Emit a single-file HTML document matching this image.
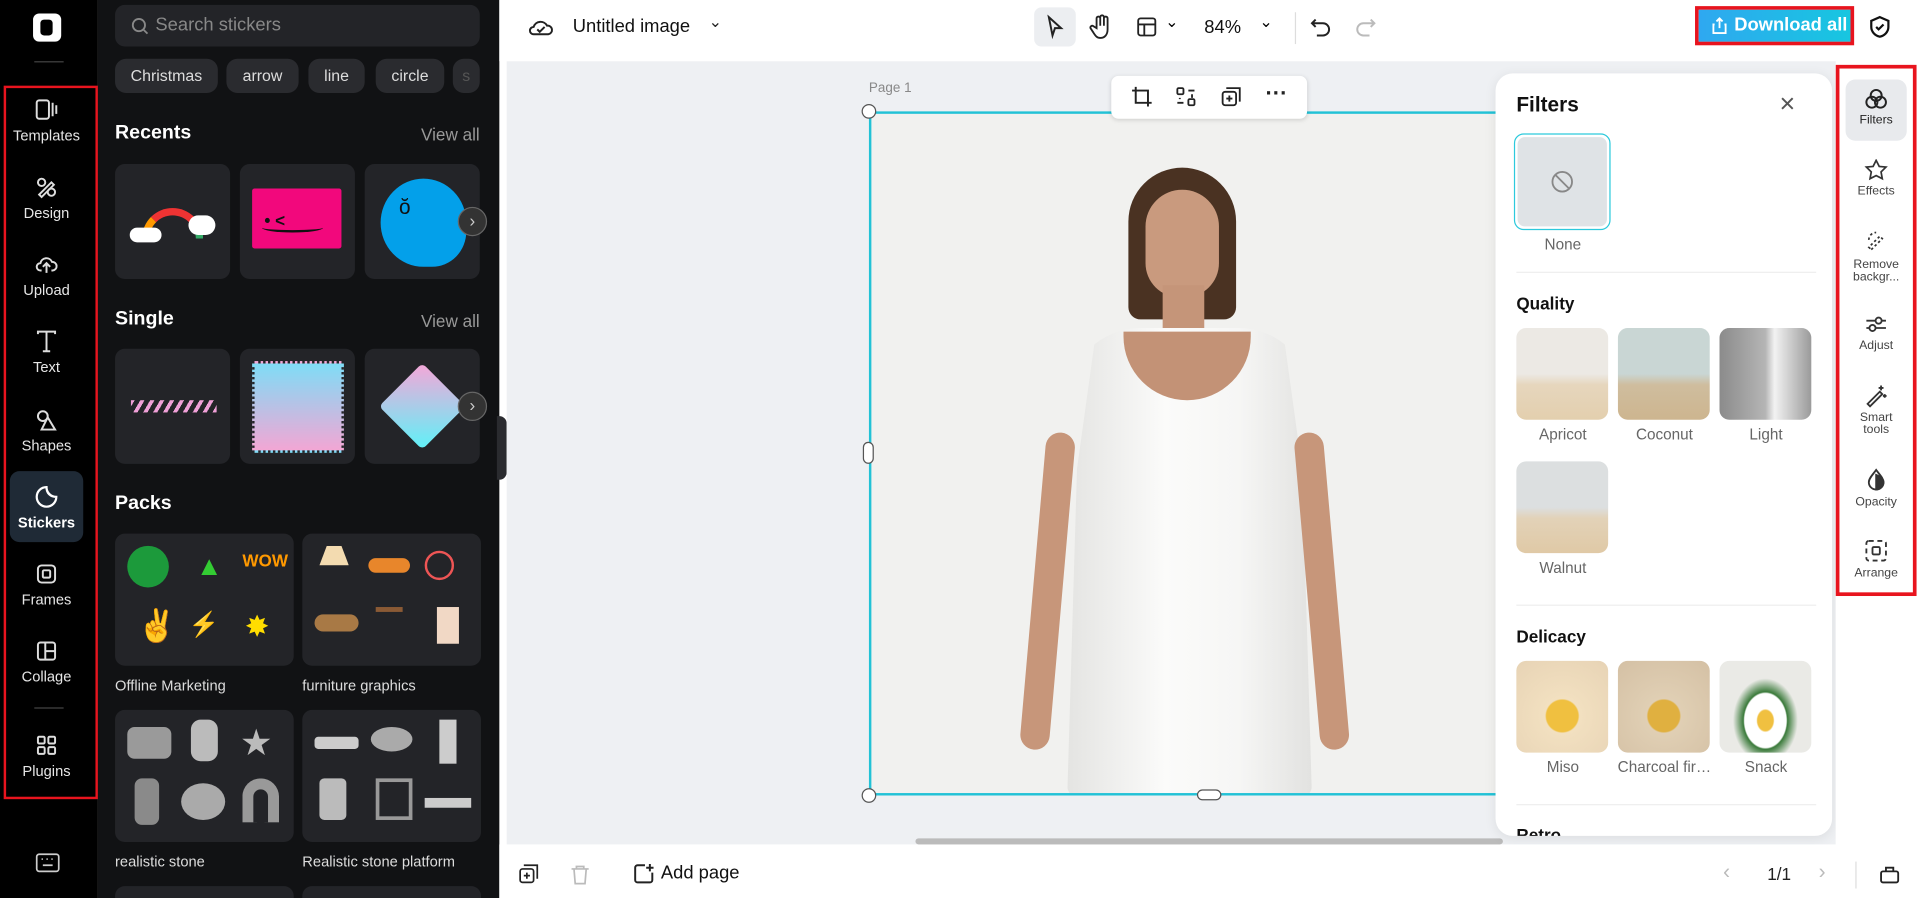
<!DOCTYPE html>
<html><head><meta charset="utf-8">
<style>
*{box-sizing:border-box;margin:0;padding:0}
html,body{width:1919px;height:898px;overflow:hidden;background:#fff}
#w{width:1568px;height:734px;transform:scale(1.22385);transform-origin:0 0;position:relative;font-family:"Liberation Sans",sans-serif}
.a{position:absolute}
.rail{left:0;top:0;width:80px;height:734px;background:#000}
.ri{position:absolute;left:8px;width:60px;text-align:center;color:#e6e6e6;font-size:12px}
.ri svg{display:block;margin:0 auto 4px}
.panel{left:80px;top:0;width:328px;height:734px;background:#111214}
.chip{position:absolute;top:48px;height:28px;border-radius:9px;background:#2a2b2f;color:#ddd;font-size:13px;line-height:28px;text-align:center}
.h{position:absolute;color:#fff;font-weight:bold;font-size:16px}
.va{position:absolute;right:16px;color:#999;font-size:14px}
.card{position:absolute;width:94px;height:94px;border-radius:8px;background:#232428;overflow:hidden}
.pack{position:absolute;width:146px;height:108px;border-radius:8px;background:#232428}
.pl{position:absolute;color:#ddd;font-size:12px}
.nxt{position:absolute;width:24px;height:24px;border-radius:50%;background:#333;border:1px solid #666;color:#ccc;font-size:14px;line-height:21px;text-align:center}
.ft{position:absolute;width:75px;height:75px;border-radius:8px;overflow:hidden}
.fl{position:absolute;width:90px;text-align:center;font-size:12.5px;color:#666}
.rr{position:absolute;left:1508px;width:50px;text-align:center;font-size:10px;color:#444;line-height:10px}
.rr svg{display:block;margin:0 auto 4px}
.desert{background:linear-gradient(#ece9e4 0 50%,#e6d6bd 62%,#e3cfae)}
</style></head><body><div id="w">
<!-- left rail -->
<div class="a rail">
 <div class="a" style="left:27px;top:11px;width:23px;height:23px;background:#fff;border-radius:5px"><div class="a" style="left:6px;top:5px;width:10px;height:13px;border-radius:3px;background:#000"></div></div>
 <div class="a" style="left:28px;top:50px;width:24px;height:1px;background:#444"></div>
 <div class="a" style="left:3px;top:70px;width:77px;height:583px;border:2px solid #e8141e"></div>
 <div class="ri" style="top:80px"><svg width="20" height="20" viewBox="0 0 20 20" fill="none" stroke="#ddd" stroke-width="1.6"><rect x="2" y="2" width="10" height="15" rx="2"/><path d="M15 4v11M18 6v7"/></svg>Templates</div>
 <div class="ri" style="top:143px"><svg width="20" height="20" viewBox="0 0 20 20" fill="none" stroke="#ddd" stroke-width="1.6"><circle cx="6" cy="6" r="3"/><path d="M4 16l10-10 2 2-10 10z"/><circle cx="14" cy="14" r="3"/></svg>Design</div>
 <div class="ri" style="top:206px"><svg width="20" height="20" viewBox="0 0 20 20" fill="none" stroke="#ddd" stroke-width="1.6"><path d="M6 15H5a3 3 0 010-6 5 5 0 019.5-1A3.5 3.5 0 0115 15h-1M10 17V10M7 12l3-3 3 3"/></svg>Upload</div>
 <div class="ri" style="top:269px"><svg width="20" height="20" viewBox="0 0 20 20" fill="none" stroke="#ddd" stroke-width="1.6"><path d="M3 4V2h14v2M10 2v16M7 18h6"/></svg>Text</div>
 <div class="ri" style="top:333px"><svg width="20" height="20" viewBox="0 0 20 20" fill="none" stroke="#ddd" stroke-width="1.6"><circle cx="7" cy="7" r="4"/><path d="M11 8l6 10H6z"/></svg>Shapes</div>
 <div class="a" style="left:8px;top:385px;width:60px;height:58px;background:#1f2a36;border-radius:8px"></div>
 <div class="ri" style="top:396px;color:#fff;font-weight:bold"><svg width="20" height="20" viewBox="0 0 20 20" fill="none" stroke="#fff" stroke-width="1.8"><path d="M10 2a8 8 0 108 8 8 8 0 01-8-8zM10 2c0 5 3 8 8 8"/></svg>Stickers</div>
 <div class="ri" style="top:459px"><svg width="20" height="20" viewBox="0 0 20 20" fill="none" stroke="#ddd" stroke-width="1.6"><rect x="3" y="3" width="14" height="14" rx="3"/><rect x="7" y="7" width="6" height="6" rx="1"/></svg>Frames</div>
 <div class="ri" style="top:522px"><svg width="20" height="20" viewBox="0 0 20 20" fill="none" stroke="#ddd" stroke-width="1.6"><rect x="3" y="3" width="14" height="14" rx="2"/><path d="M9 3v14M9 10h8"/></svg>Collage</div>
 <div class="a" style="left:28px;top:578px;width:24px;height:1px;background:#444"></div>
 <div class="ri" style="top:599px"><svg width="20" height="20" viewBox="0 0 20 20" fill="none" stroke="#ddd" stroke-width="1.6"><rect x="3" y="3" width="5.5" height="5.5" rx="1"/><rect x="11.5" y="3" width="5.5" height="5.5" rx="1"/><rect x="3" y="11.5" width="5.5" height="5.5" rx="1"/><rect x="11.5" y="11.5" width="5.5" height="5.5" rx="1"/></svg>Plugins</div>
 <svg class="a" style="left:29px;top:697px" width="20" height="16" viewBox="0 0 20 16" fill="none" stroke="#ccc" stroke-width="1.4"><rect x="1" y="1" width="18" height="14" rx="2"/><path d="M5 5h1M9 5h1M13 5h1M6 10h8"/></svg>
</div>
<!-- sticker panel -->
<div class="a panel">
 <div class="a" style="left:14px;top:4px;width:298px;height:34px;border-radius:8px;background:#232428;color:#888;font-size:15px;line-height:34px;padding-left:33px">Search stickers
  <svg class="a" style="left:13px;top:10px" width="15" height="15" viewBox="0 0 15 15" fill="none" stroke="#888" stroke-width="1.5"><circle cx="6.5" cy="6.5" r="5"/><path d="M10.5 10.5l3 3"/></svg></div>
 <div class="chip" style="left:14px;width:84px">Christmas</div>
 <div class="chip" style="left:105px;width:59px">arrow</div>
 <div class="chip" style="left:172px;width:46px">line</div>
 <div class="chip" style="left:227px;width:56px">circle</div>
 <div class="chip" style="left:290px;width:22px;color:#555">s</div>
 <div class="h" style="left:14px;top:100px">Recents</div><div class="va" style="top:102px">View all</div>
 <div class="card" style="left:14px;top:134px"><div class="a" style="left:22px;top:36px;width:50px;height:25px;border-radius:25px 25px 0 0;border:6px solid;border-color:#e33 #3a6 #33c #f90;border-bottom:none"></div><div class="a" style="left:12px;top:52px;width:26px;height:12px;background:#fff;border-radius:8px"></div><div class="a" style="left:60px;top:42px;width:22px;height:16px;background:#fff;border-radius:8px"></div></div>
 <div class="card" style="left:116px;top:134px"><div class="a" style="left:10px;top:20px;width:73px;height:49px;background:#f2087c;border-radius:2px"></div><div class="a" style="left:20px;top:38px;color:#111;font-size:14px;font-weight:bold">•  &lt;</div><div class="a" style="left:18px;top:48px;width:50px;height:8px;border-bottom:2px solid #111;border-radius:0 0 50% 50%"></div></div>
 <div class="card" style="left:218px;top:134px"><div class="a" style="left:13px;top:12px;width:70px;height:72px;background:#03a0ea;border-radius:50% 50% 40% 50%"></div><div class="a" style="left:28px;top:26px;font-size:17px;color:#111">ŏ</div></div>
 <div class="nxt" style="left:294px;top:169px">›</div>
 <div class="h" style="left:14px;top:252px">Single</div><div class="va" style="top:254px">View all</div>
 <div class="card" style="left:14px;top:285px"><div class="a" style="left:13px;top:42px;width:70px;height:10px;background:repeating-linear-gradient(-60deg,#f0a0d8 0 3px,transparent 3px 7px)"></div></div>
 <div class="card" style="left:116px;top:285px"><div class="a" style="left:10px;top:10px;width:75px;height:75px;background:linear-gradient(#7fdcf6,#f3a6d4);border:2px dotted #232428"></div></div>
 <div class="card" style="left:218px;top:285px"><div class="a" style="left:22px;top:22px;width:50px;height:50px;transform:rotate(45deg);background:linear-gradient(135deg,#f6a6d8,#5ef2f8);border-radius:4px"></div></div>
 <div class="nxt" style="left:294px;top:320px">›</div>
 <div class="h" style="left:14px;top:403px">Packs</div>
 <div class="pack" style="left:14px;top:436px"><div class="a" style="left:10px;top:10px;width:34px;height:34px;border-radius:50%;background:#1c9a3b"></div><div class="a" style="left:66px;top:14px;color:#3c3;font-size:22px">▲</div><div class="a" style="left:104px;top:14px;color:#f90;font-weight:bold;font-size:14px">WOW</div><div class="a" style="left:18px;top:60px;color:#fff;font-size:26px">✌</div><div class="a" style="left:60px;top:62px;color:#fc0;font-size:20px">⚡</div><div class="a" style="left:106px;top:62px;color:#fd0;font-size:24px">✸</div></div>
 <div class="pl" style="left:14px;top:553px">Offline Marketing</div>
 <div class="pack" style="left:167px;top:436px"><div class="a" style="left:14px;top:10px;width:24px;height:16px;background:#f3dbb0;clip-path:polygon(25% 0,75% 0,100% 100%,0 100%)"></div><div class="a" style="left:54px;top:20px;width:34px;height:12px;background:#e8862b;border-radius:6px"></div><div class="a" style="left:100px;top:14px;width:24px;height:24px;border:2px solid #e55;border-radius:50%"></div><div class="a" style="left:10px;top:66px;width:36px;height:14px;background:#a87945;border-radius:7px"></div><div class="a" style="left:60px;top:60px;width:22px;height:30px;border-top:4px solid #8a5a35"></div><div class="a" style="left:110px;top:60px;width:18px;height:30px;background:#f1d8c5"></div></div>
 <div class="pl" style="left:167px;top:553px">furniture graphics</div>
 <div class="pack" style="left:14px;top:580px"><div class="a" style="left:10px;top:14px;width:36px;height:26px;background:#9a9a9a;border-radius:6px"></div><div class="a" style="left:62px;top:8px;width:22px;height:34px;background:#bbb;border-radius:8px"></div><div class="a" style="left:102px;top:10px;color:#bbb;font-size:30px">★</div><div class="a" style="left:16px;top:56px;width:20px;height:38px;background:#8a8a8a;border-radius:6px"></div><div class="a" style="left:54px;top:60px;width:36px;height:30px;background:#aaa;border-radius:50%"></div><div class="a" style="left:104px;top:56px;width:30px;height:36px;border:9px solid #999;border-bottom:none;border-radius:15px 15px 0 0"></div></div>
 <div class="pl" style="left:14px;top:697px">realistic stone</div>
 <div class="pack" style="left:167px;top:580px"><div class="a" style="left:10px;top:22px;width:36px;height:10px;background:#ccc;border-radius:3px"></div><div class="a" style="left:56px;top:14px;width:34px;height:20px;background:#aaa;border-radius:50%"></div><div class="a" style="left:112px;top:8px;width:14px;height:36px;background:#ccc"></div><div class="a" style="left:14px;top:56px;width:22px;height:34px;background:#bbb;border-radius:4px"></div><div class="a" style="left:60px;top:56px;width:30px;height:34px;border:3px solid #999"></div><div class="a" style="left:100px;top:72px;width:38px;height:8px;background:#ccc"></div></div>
 <div class="pl" style="left:167px;top:697px">Realistic stone platform</div>
 <div class="a" style="left:14px;top:724px;width:146px;height:20px;background:#232428;border-radius:8px"></div>
 <div class="a" style="left:167px;top:724px;width:146px;height:20px;background:#232428;border-radius:8px"></div>
</div>
<div class="a" style="left:406px;top:340px;width:8px;height:52px;background:#2a2b2f;border-radius:0 6px 6px 0"></div>
<!-- canvas area -->
<div class="a" style="left:414px;top:50px;width:1086px;height:640px;background:#eef0f3"></div>
<div class="a" style="left:408px;top:0;width:1160px;height:50px;background:#fff"></div>
<svg class="a" style="left:432px;top:13px" width="20" height="18" viewBox="0 0 20 18" fill="none" stroke="#222" stroke-width="1.6"><path d="M5 15H4a3 3 0 010-6 6 6 0 0111-1 3.5 3.5 0 011 7zM7 11l2 2 4-4"/></svg>
<div class="a" style="left:468px;top:13px;font-size:15px;color:#111">Untitled image</div>
<div class="a" style="left:579px;top:10px;font-size:13px;color:#222">⌄</div>
<div class="a" style="left:845px;top:6px;width:34px;height:32px;background:#eceef1;border-radius:6px"></div>
<svg class="a" style="left:854px;top:12px" width="16" height="20" viewBox="0 0 16 20" fill="none" stroke="#222" stroke-width="1.6"><path d="M3 2l10 9H8l-2 6z"/></svg>
<svg class="a" style="left:890px;top:11px" width="20" height="22" viewBox="0 0 20 22" fill="none" stroke="#222" stroke-width="1.5"><path d="M6 12V4a1.5 1.5 0 013 0v6V3a1.5 1.5 0 013 0v7V4a1.5 1.5 0 013 0v9c0 4-2 7-6 7-3 0-4-2-6-5l-2-3a1.5 1.5 0 012.5-1.5z"/></svg>
<svg class="a" style="left:928px;top:13px" width="18" height="18" viewBox="0 0 18 18" fill="none" stroke="#222" stroke-width="1.5"><rect x="2" y="2" width="14" height="14" rx="2"/><path d="M2 7h14M7 7v9"/></svg>
<div class="a" style="left:952px;top:10px;font-size:13px">⌄</div>
<div class="a" style="left:984px;top:14px;font-size:15px;color:#111">84%</div>
<div class="a" style="left:1029px;top:10px;font-size:13px">⌄</div>
<div class="a" style="left:1058px;top:10px;width:1px;height:26px;background:#ddd"></div>
<svg class="a" style="left:1070px;top:13px" width="18" height="18" viewBox="0 0 18 18" fill="none" stroke="#222" stroke-width="1.6"><path d="M5 3L2 6l3 3M2 6h9a5 5 0 010 10H6"/></svg>
<svg class="a" style="left:1107px;top:13px" width="18" height="18" viewBox="0 0 18 18" fill="none" stroke="#bbb" stroke-width="1.6"><path d="M13 3l3 3-3 3M16 6H7a5 5 0 000 10h5"/></svg>
<div class="a" style="left:1385px;top:5px;width:130px;height:32px;border:3px solid #e8141e"></div>
<div class="a" style="left:1388px;top:8px;width:124px;height:26px;background:linear-gradient(90deg,#2fa8f0,#17c6e0);color:#fff;font-weight:bold;font-size:15px;line-height:26px;padding-left:29px">Download all</div>
<svg class="a" style="left:1398px;top:14px" width="14" height="14" viewBox="0 0 14 14" fill="none" stroke="#fff" stroke-width="1.5"><path d="M3 6H2v7h10V6h-1M7 9V1M4.5 3.5L7 1l2.5 2.5"/></svg>
<svg class="a" style="left:1527px;top:12px" width="18" height="20" viewBox="0 0 18 20" fill="none" stroke="#111" stroke-width="1.8"><path d="M9 2l7 3v5c0 4-3 7-7 8-4-1-7-4-7-8V5zM6 10l2 2 4-4"/></svg>
<!-- canvas -->
<div class="a" style="left:710px;top:66px;font-size:11px;color:#888">Page 1</div>
<div class="a" style="left:710px;top:91px;width:520px;height:559px;background:#f1f1ef;border:2px solid #22c2d6;overflow:hidden">
 <div class="a" style="left:210px;top:44px;width:88px;height:124px;background:#4a3222;border-radius:44px 44px 10px 10px"></div>
 <div class="a" style="left:224px;top:62px;width:60px;height:88px;background:#c99a7e;border-radius:30px 30px 28px 28px"></div>
 <div class="a" style="left:238px;top:140px;width:34px;height:44px;background:#c59579"></div>
 <div class="a" style="left:160px;top:175px;width:200px;height:384px;background:linear-gradient(90deg,#e4e4e2,#fbfbfa 40%,#f6f6f5 70%,#e2e2e0);border-radius:60px 60px 10px 10px;clip-path:polygon(12% 0,88% 0,96% 30%,100% 100%,0 100%,4% 30%)"></div>
 <div class="a" style="left:206px;top:178px;width:104px;height:56px;background:#c39276;border-radius:0 0 52px 52px"></div>
 <div class="a" style="left:132px;top:260px;width:24px;height:260px;background:#c7967a;border-radius:12px;transform:rotate(5deg)"></div>
 <div class="a" style="left:356px;top:260px;width:24px;height:260px;background:#c7967a;border-radius:12px;transform:rotate(-5deg)"></div>
</div>
<div class="a" style="left:704px;top:85px;width:12px;height:12px;border-radius:50%;background:#fff;border:1px solid #555"></div>
<div class="a" style="left:704px;top:644px;width:12px;height:12px;border-radius:50%;background:#fff;border:1px solid #555"></div>
<div class="a" style="left:705px;top:361px;width:9px;height:18px;border-radius:5px;background:#fff;border:1px solid #555"></div>
<div class="a" style="left:978px;top:645px;width:20px;height:9px;border-radius:5px;background:#fff;border:1px solid #555"></div>
<div class="a" style="left:908px;top:62px;width:160px;height:35px;background:#fff;border-radius:6px;box-shadow:0 1px 4px rgba(0,0,0,.15)"></div>
<svg class="a" style="left:924px;top:70px" width="18" height="18" viewBox="0 0 18 18" fill="none" stroke="#222" stroke-width="1.6"><path d="M4 1v13h13M1 4h13v13"/></svg>
<svg class="a" style="left:960px;top:70px" width="18" height="18" viewBox="0 0 18 18" fill="none" stroke="#222" stroke-width="1.5"><rect x="2" y="2" width="5" height="5" rx="1"/><rect x="11" y="11" width="5" height="5" rx="1"/><path d="M11 4h5M2 14h5M14 7v3M4 10v1"/></svg>
<svg class="a" style="left:997px;top:70px" width="18" height="18" viewBox="0 0 18 18" fill="none" stroke="#222" stroke-width="1.5"><rect x="2" y="5" width="11" height="11" rx="2"/><path d="M5 2h11v11M7.5 8v5M5 10.5h5"/></svg>
<div class="a" style="left:1034px;top:66px;font-size:18px;font-weight:bold;color:#222">···</div>
<div class="a" style="left:748px;top:685px;width:480px;height:5px;background:#bbb;border-radius:3px"></div>
<!-- filters panel -->
<div class="a" style="left:1222px;top:60px;width:275px;height:623px;background:#fff;border-radius:14px;box-shadow:0 2px 10px rgba(0,0,0,.08);overflow:hidden">
 <div class="a" style="left:17px;top:16px;font-size:17px;font-weight:bold;color:#111">Filters</div>
 <div class="a" style="left:232px;top:12px;font-size:22px;color:#555;font-weight:300">×</div>
 <div class="a" style="left:15px;top:49px;width:79px;height:79px;border:1.5px solid #2cc9dc;border-radius:8px;padding:2px"><div style="width:100%;height:100%;background:#dfe3e6;border-radius:6px"></div></div>
 <svg class="a" style="left:45px;top:79px" width="19" height="19" viewBox="0 0 19 19" fill="none" stroke="#888" stroke-width="1.5"><circle cx="9.5" cy="9.5" r="8"/><path d="M4 4l11 11"/></svg>
 <div class="fl" style="left:10px;top:133px">None</div>
 <div class="a" style="left:17px;top:162px;width:245px;height:1px;background:#eee"></div>
 <div class="a" style="left:17px;top:180px;font-size:14px;font-weight:bold;color:#111">Quality</div>
 <div class="ft desert" style="left:17px;top:208px"></div>
 <div class="ft desert" style="left:100px;top:208px;background:linear-gradient(#c9d6d4 0 50%,#cfbd9e 62%,#cdb58f)"></div>
 <div class="ft" style="left:183px;top:208px;background:linear-gradient(90deg,#8b8b8b,#b5b5b5 50%,#f2f2f2 60%,#9a9a9a)"></div>
 <div class="fl" style="left:10px;top:288px">Apricot</div><div class="fl" style="left:93px;top:288px">Coconut</div><div class="fl" style="left:176px;top:288px">Light</div>
 <div class="ft desert" style="left:17px;top:317px;background:linear-gradient(#dcdfe0 0 50%,#e2d2b8 62%,#e0c9a6)"></div>
 <div class="fl" style="left:10px;top:397px">Walnut</div>
 <div class="a" style="left:17px;top:434px;width:245px;height:1px;background:#eee"></div>
 <div class="a" style="left:17px;top:452px;font-size:14px;font-weight:bold;color:#111">Delicacy</div>
 <div class="ft" style="left:17px;top:480px;background:radial-gradient(circle at 50% 60%,#f0c040 0 22%,#f2e0c0 24%,#e7d3b5)"></div>
 <div class="ft" style="left:100px;top:480px;background:radial-gradient(circle at 50% 60%,#e0b040 0 22%,#e0cfb4 24%,#d4c0a4)"></div>
 <div class="ft" style="left:183px;top:480px;background:radial-gradient(ellipse at 50% 65%,#f0c040 0 12%,#fff 14% 32%,#3a7a3a 34%,#eaeae6 50%)"></div>
 <div class="fl" style="left:10px;top:560px">Miso</div><div class="fl" style="left:93px;top:560px">Charcoal fir…</div><div class="fl" style="left:176px;top:560px">Snack</div>
 <div class="a" style="left:17px;top:597px;width:245px;height:1px;background:#eee"></div>
 <div class="a" style="left:17px;top:614px;font-size:14px;font-weight:bold;color:#111">Retro</div>
</div>
<!-- right rail -->
<div class="a" style="left:1500px;top:52px;width:68px;height:638px;background:#fff"></div>
<div class="a" style="left:1500px;top:53px;width:66px;height:434px;border:3px solid #e8141e"></div>
<div class="a" style="left:1508px;top:65px;width:50px;height:50px;background:#e8eaed;border-radius:8px"></div>
<div class="rr" style="top:72px;color:#222"><svg width="20" height="18" viewBox="0 0 20 18" fill="none" stroke="#222" stroke-width="1.6"><circle cx="10" cy="6" r="4.5"/><circle cx="6.5" cy="11.5" r="4.5"/><circle cx="13.5" cy="11.5" r="4.5"/></svg>Filters</div>
<div class="rr" style="top:130px"><svg width="20" height="18" viewBox="0 0 20 18" fill="none" stroke="#333" stroke-width="1.4"><path d="M10 1l2.5 5 5.5.5-4 4 1 5.5-5-2.5-5 2.5 1-5.5-4-4 5.5-.5z"/></svg>Effects</div>
<div class="rr" style="top:188px"><svg width="20" height="20" viewBox="0 0 20 20" fill="none" stroke="#333" stroke-width="1.4"><path d="M6 16L15 7l-2-2-9 9zM4 8a6 6 0 016-6" stroke-dasharray="2 2"/></svg>Remove<br>backgr...</div>
<div class="rr" style="top:256px"><svg width="20" height="18" viewBox="0 0 20 18" fill="none" stroke="#333" stroke-width="1.5"><path d="M2 6h16M2 12h16"/><circle cx="12" cy="6" r="2.5" fill="#fff"/><circle cx="7" cy="12" r="2.5" fill="#fff"/></svg>Adjust</div>
<div class="rr" style="top:313px"><svg width="20" height="20" viewBox="0 0 20 20" fill="none" stroke="#333" stroke-width="1.5"><path d="M3 17L13 7l2 2L5 19zM14 2v4M12 4h4M17 9v3M15.5 10.5h3"/></svg>Smart<br>tools</div>
<div class="rr" style="top:382px"><svg width="20" height="20" viewBox="0 0 20 20" fill="none" stroke="#333" stroke-width="1.5"><path d="M10 2c3 4 6 7 6 10a6 6 0 01-12 0c0-3 3-6 6-10z"/><path d="M10 6v12a6 6 0 006-6c0-2-3-5-6-6z" fill="#333"/></svg>Opacity</div>
<div class="rr" style="top:440px"><svg width="20" height="20" viewBox="0 0 20 20" fill="none" stroke="#333" stroke-width="1.5"><rect x="2" y="2" width="16" height="16" rx="2" stroke-dasharray="4 3"/><rect x="7" y="7" width="6" height="6" rx="1"/></svg>Arrange</div>
<!-- bottom bar -->
<div class="a" style="left:408px;top:690px;width:1160px;height:44px;background:#fff"></div>
<svg class="a" style="left:424px;top:706px" width="17" height="17" viewBox="0 0 17 17" fill="none" stroke="#222" stroke-width="1.4"><rect x="1" y="4" width="11" height="11" rx="2"/><path d="M4 1h11v11M6.5 7v5M4 9.5h5"/></svg>
<svg class="a" style="left:466px;top:706px" width="16" height="17" viewBox="0 0 16 17" fill="none" stroke="#bbb" stroke-width="1.4"><path d="M1 4h14M5 4V2h6v2M3 4l1 12h8l1-12"/></svg>
<svg class="a" style="left:517px;top:705px" width="18" height="18" viewBox="0 0 18 18" fill="none" stroke="#222" stroke-width="1.6"><path d="M10 2H4a2 2 0 00-2 2v10a2 2 0 002 2h10a2 2 0 002-2V8M14 1v6M11 4h6"/></svg>
<div class="a" style="left:540px;top:705px;font-size:15px;color:#111">Add page</div>
<div class="a" style="left:1408px;top:703px;font-size:17px;color:#bbb">‹</div>
<div class="a" style="left:1444px;top:706px;font-size:14px;color:#222">1/1</div>
<div class="a" style="left:1486px;top:703px;font-size:17px;color:#bbb">›</div>
<div class="a" style="left:1516px;top:704px;width:1px;height:22px;background:#ddd"></div>
<svg class="a" style="left:1535px;top:705px" width="18" height="18" viewBox="0 0 18 18" fill="none" stroke="#222" stroke-width="1.5"><rect x="2" y="7" width="14" height="9" rx="1.5"/><path d="M6 7V4h6v3"/></svg>
</div></body></html>
